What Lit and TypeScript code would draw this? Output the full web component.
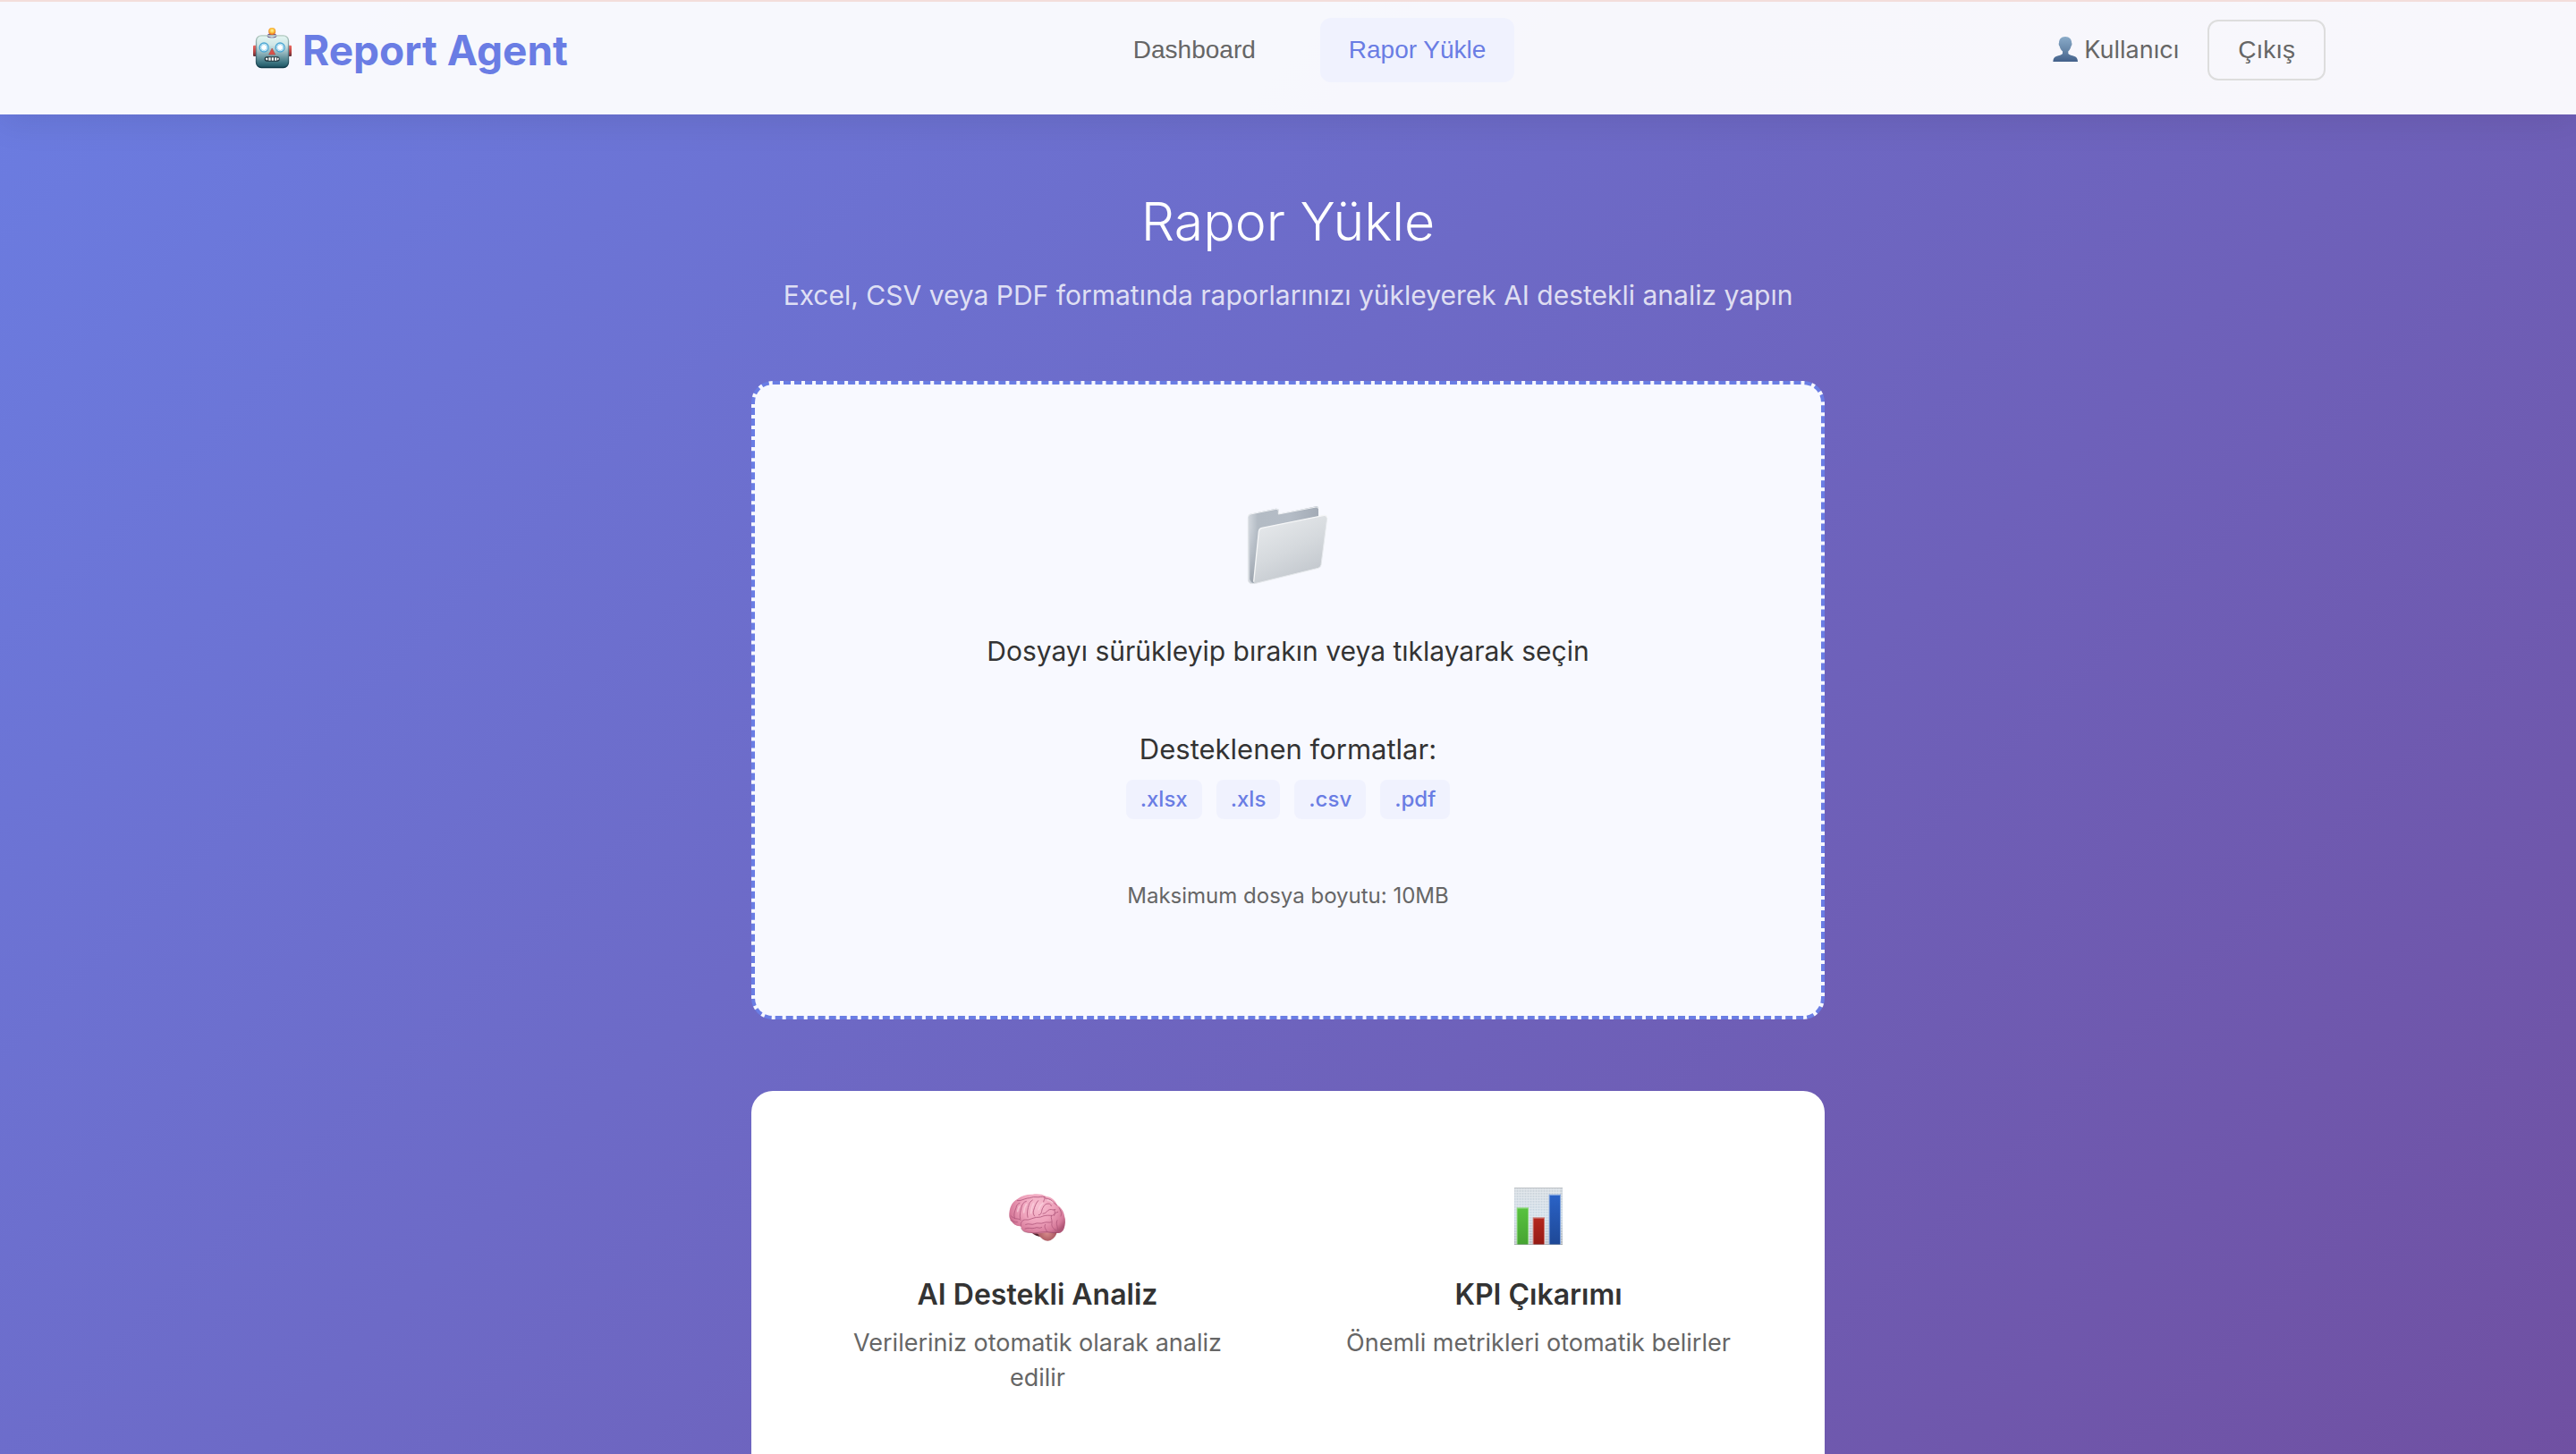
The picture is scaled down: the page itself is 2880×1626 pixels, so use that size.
import { LitElement, html, css, svg } from "lit";
import { customElement } from "lit/decorators.js";

const robotIcon = svg`
  <svg class="robot" viewBox="60 84 144 168" aria-hidden="true">
    <defs>
      <linearGradient id="rb-head" x1="0" y1="0" x2="0" y2="1">
        <stop offset="0" stop-color="#e3f6f2" />
        <stop offset="0.3" stop-color="#cfe6e6" />
        <stop offset="0.55" stop-color="#8fb3bb" />
        <stop offset="0.85" stop-color="#3b7480" />
        <stop offset="1" stop-color="#1d5361" />
      </linearGradient>
      <linearGradient id="rb-rim" x1="0" y1="0" x2="0" y2="1">
        <stop offset="0" stop-color="#b3c9c0" />
        <stop offset="0.5" stop-color="#5f8791" />
        <stop offset="1" stop-color="#0f3a48" />
      </linearGradient>
      <radialGradient id="rb-ball" cx="0.5" cy="0.4" r="0.6">
        <stop offset="0" stop-color="#fff3a0" />
        <stop offset="0.5" stop-color="#fcc43c" />
        <stop offset="1" stop-color="#e2631c" />
      </radialGradient>
      <linearGradient id="rb-ear" x1="0" y1="0" x2="0" y2="1">
        <stop offset="0" stop-color="#ee6a62" />
        <stop offset="0.6" stop-color="#b8403f" />
        <stop offset="1" stop-color="#5a3038" />
      </linearGradient>
    </defs>
    <rect x="69" y="152" width="12" height="37" rx="3" fill="url(#rb-ear)" />
    <rect x="186" y="152" width="12" height="37" rx="3" fill="url(#rb-ear)" />
    <path d="M115 122q2-10 17-10t17 10q-4 5-17 5t-17-5z" fill="#6b5390" />
    <circle cx="132.500" cy="105" r="12" fill="url(#rb-ball)" />
    <rect x="79.500" y="119.500" width="108" height="107" rx="17" fill="url(#rb-head)" stroke="url(#rb-rim)" stroke-width="4" />
    <path d="M115 120q17 10 34 0l-4 5q-13 4-26 0z" fill="#59437d" />
    <circle cx="105.500" cy="159" r="15" fill="#fff" stroke="#4ba6d3" stroke-width="4" />
    <circle cx="105.500" cy="159" r="10.500" fill="#fff" stroke="#8fd0ec" stroke-width="3" />
    <circle cx="159.500" cy="159" r="15" fill="#fff" stroke="#4ba6d3" stroke-width="4" />
    <circle cx="159.500" cy="159" r="10.500" fill="#fff" stroke="#8fd0ec" stroke-width="3" />
    <path d="M132.500 162l11 21h-22z" fill="#d9504a" stroke="#a9453f" stroke-width="1.500" />
    <rect x="107" y="190" width="51" height="16" rx="8" fill="#20343c" />
    <path d="M111 194h7v8h-5q-3-4-2-8zM121 193h7v10h-7zM131 193h7v10h-7zM141 193h7v10h-7zM150 194h5q1 5-2 8h-3z" fill="#f3f6f4" />
  </svg>`;

const userIcon = svg`
  <svg class="person" viewBox="96 120 96 96" aria-hidden="true">
    <defs>
      <linearGradient id="us-fill" x1="0" y1="123" x2="0" y2="207" gradientUnits="userSpaceOnUse">
        <stop offset="0" stop-color="#8aabc9" />
        <stop offset="0.55" stop-color="#6686a8" />
        <stop offset="1" stop-color="#43608a" />
      </linearGradient>
    </defs>
    <path d="M144 123c14 0 21.500 9 21.500 21 1.500 1 1.500 8-2 11-2 9-6 14-9.500 17v8c4 5 12 6 21 9 7 2 10.500 8 11 18H103c.5-10 4-16 11-18 9-3 17-4 21-9v-8c-4-3-8-8-10-17-3.500-3-3.500-10-2-11 0-12 7-21 21-21z" fill="url(#us-fill)" />
  </svg>`;

const folderIcon = svg`
  <svg class="folder" viewBox="96 66 288 288" aria-hidden="true">
    <defs>
      <linearGradient id="fd-back" x1="105" y1="0" x2="342" y2="0" gradientUnits="userSpaceOnUse">
        <stop offset="0" stop-color="#d5dae0" />
        <stop offset="0.14" stop-color="#b3bbc4" />
        <stop offset="0.6" stop-color="#b4bcc6" />
        <stop offset="1" stop-color="#a3abb6" />
      </linearGradient>
      <linearGradient id="fd-front" x1="200" y1="130" x2="290" y2="320" gradientUnits="userSpaceOnUse">
        <stop offset="0" stop-color="#e3e6e9" />
        <stop offset="0.5" stop-color="#d5d9dd" />
        <stop offset="1" stop-color="#c3c8ce" />
      </linearGradient>
      <linearGradient id="fd-side" x1="0" y1="150" x2="0" y2="340" gradientUnits="userSpaceOnUse">
        <stop offset="0" stop-color="#a9b1bb" stop-opacity="0" />
        <stop offset="1" stop-color="#9aa2ac" />
      </linearGradient>
    </defs>
    <path d="M106 113q0-7 7-9l86-18q10-1 10 7v11l125-25q8-1 8 6v190l-213 62q-22 6-23-14z" fill="url(#fd-back)" />
    <path d="M107 113q0-6 7-8l86-17q8-1 8 6v11l126-24q7-1 7 5" fill="none" stroke="#f0f2f4" stroke-width="3" />
    <path d="M112 130l32 30-16 176q-14 0-16-14z" fill="url(#fd-side)" />
    <path d="M142 164q1-11 11-13l208-42q10-1 10 9l-20 157q-2 9-10 11l-213 52q-4-1-3-8z" fill="url(#fd-front)" />
    <path d="M125 332l17-168q1-11 11-13l208-42q10-1 10 9" fill="none" stroke="#f5f6f7" stroke-width="4" />
    <path d="M371 118l-20 157q-2 9-10 11l-213 52" fill="none" stroke="#e6e9ec" stroke-width="3" />
    <path d="M106 118v206q0 14 16 14" fill="none" stroke="#e2e5e9" stroke-width="3" />
  </svg>`;

const brainIcon = svg`
  <svg class="feature-icon" viewBox="60 30 240 240" aria-hidden="true">
    <defs>
      <radialGradient id="br-fill" cx="180" cy="115" r="110" gradientUnits="userSpaceOnUse">
        <stop offset="0" stop-color="#f8bfd1" />
        <stop offset="0.5" stop-color="#efa3bc" />
        <stop offset="0.85" stop-color="#d67a9a" />
        <stop offset="1" stop-color="#b05777" />
      </radialGradient>
      <radialGradient id="br-stem" cx="212" cy="206" r="34" gradientUnits="userSpaceOnUse">
        <stop offset="0" stop-color="#d88c8c" />
        <stop offset="1" stop-color="#a5525c" />
      </radialGradient>
    </defs>
    <path d="M160 205q20-8 34 2l2 12q-24 0-36-14z" fill="#54242e" />
    <path d="M178 206q30-14 68-4-6 22-22 29-14 5-26-3-10-7-20-22z" fill="url(#br-stem)" />
    <path d="M85 150c-1-26 8-48 28-58 14-11 32-16 50-15 14-3 34-1 45 6 18 2 32 14 38 30 14 8 22 22 24 36 5 14 3 30-1 42-4 12-14 18-24 15-14 4-30-2-44 0-18 2-32 4-46 0-18 0-30-8-31-22-12 0-24-6-29-14-6-6-9-12-10-20z" fill="url(#br-fill)" />
    <g fill="none" stroke="#b0587c" stroke-width="2.500" stroke-linecap="round" stroke-linejoin="round">
      <path d="M124 184c-2-12 4-22 16-22 12 2 18-4 28-6 10-4 20 0 30-6 12-4 22-2 32-2 8-4 8-10 18-12" />
      <path d="M104 158c-6-12 0-26 4-36 0-8 6-14 12-16" />
      <path d="M92 150c4 4 8 6 14 8 8 2 14 0 18 6" />
      <path d="M122 160c-4-14 2-28 4-40 2-10 8-18 16-20" />
      <path d="M147 154c-4-14 0-30 4-42 2-8 6-12 12-16" />
      <path d="M170 150c-4-4-6-12-3-20 4-12 6-22 15-32" />
      <path d="M184 146c12 0 8-16 14-24 4-8 8-14 18-14 6 0 10 4 10 8" />
      <path d="M198 142c12 0 14-12 22-14 10-2 12 4 20 0" />
      <path d="M112 98c12 2 22-6 34-8 12 0 16-6 28-4 14 2 18-4 30 0" />
      <path d="M204 86c2 8-4 10-4 16M206 90c14 2 22 6 28 14 4 6 8 6 12 10" />
      <path d="M252 122c6 10 10 18 6 28M236 128c4 8 2 14 0 20" />
      <path d="M140 178c12-6 20 4 30-2 10-6 20 2 32-4 8-4 18 2 24-2" />
      <path d="M138 192c14-6 20 2 32-2 10-6 14 4 24-2" />
      <path d="M226 148c-2 10 4 16 2 26-2 10 4 18 14 24" />
      <path d="M206 178c-6 8 2 16 6 24M246 164c-6 10 2 20 2 34" />
      <path d="M90 164c8 2 14 8 22 6" />
    </g>
    <g fill="none" stroke="#fbd5e0" stroke-width="5" stroke-linecap="round" opacity="0.65">
      <path d="M134 138c0-12 4-22 8-28M158 140c0-12 3-22 8-32M184 128c2-8 6-16 14-22M214 96c8 2 12 4 16 8M113 134c1-8 3-12 6-17" />
    </g>
    <path d="M125 190c4 12 16 16 32 15 14 4 30-2 46-2 14-2 30 6 44 2" fill="none" stroke="#7c3048" stroke-width="2" opacity="0.6" />
  </svg>`;

const gridX = Array.from({ length: 17 }, (_, i) => 105 + i * 9);
const gridY = Array.from({ length: 21 }, (_, i) => 61 + i * 9);

const chartIcon = svg`
  <svg class="feature-icon" viewBox="60 30 240 240" aria-hidden="true">
    <defs>
      <linearGradient id="ch-bg" x1="0" y1="0" x2="0" y2="1">
        <stop offset="0" stop-color="#ccd2d8" />
        <stop offset="0.5" stop-color="#c9d9e6" />
        <stop offset="1" stop-color="#b0b6be" />
      </linearGradient>
      <linearGradient id="ch-green" x1="0" y1="0" x2="0" y2="1">
        <stop offset="0" stop-color="#58c23f" />
        <stop offset="1" stop-color="#46a332" />
      </linearGradient>
      <linearGradient id="ch-red" x1="0" y1="0" x2="0" y2="1">
        <stop offset="0" stop-color="#b3271e" />
        <stop offset="1" stop-color="#951a14" />
      </linearGradient>
      <linearGradient id="ch-blue" x1="0" y1="0" x2="0" y2="1">
        <stop offset="0" stop-color="#2a62c6" />
        <stop offset="1" stop-color="#1e4896" />
      </linearGradient>
    </defs>
    <rect x="99" y="54" width="162" height="192" fill="url(#ch-bg)" />
    <g stroke="#f1f5f8" stroke-width="3" opacity="0.65">
      ${gridX.map((x) => svg`<path d="M${x} 56V245" />`)}
      ${gridY.map((y) => svg`<path d="M100 ${y}H260" />`)}
    </g>
    <path d="M99 55.500H261" stroke="#c0c4c8" stroke-width="3" />
    <rect x="107" y="121" width="40" height="125" fill="#8ed97c" />
    <rect x="110" y="125" width="34" height="121" fill="url(#ch-green)" />
    <rect x="161" y="154" width="40" height="92" fill="#cf7a74" />
    <rect x="164" y="158" width="34" height="88" fill="url(#ch-red)" />
    <rect x="215" y="77" width="40" height="169" fill="#7fa3de" />
    <rect x="218" y="81" width="34" height="165" fill="url(#ch-blue)" />
    <path d="M99 244.500H261" stroke="#8d9298" stroke-width="3" opacity="0.5" />
  </svg>`;

const formats = [".xlsx", ".xls", ".csv", ".pdf"];

const features = [
  { icon: brainIcon, title: "AI Destekli Analiz", text: "Verileriniz otomatik olarak analiz edilir" },
  { icon: chartIcon, title: "KPI Çıkarımı", text: "Önemli metrikleri otomatik belirler" },
];

@customElement("app-header")
export class AppHeader extends LitElement {
  static styles = css`
    :host {
      display: block;
      position: relative;
      background: rgba(255, 255, 255, 0.95);
      border-top: 2px solid #f3dedb;
      box-shadow: 0 4px 40px rgba(0, 0, 0, 0.1);
    }
    .bar {
      box-sizing: border-box;
      max-width: 2400px;
      margin: 0 auto;
      padding: 18px 40px 36px;
      display: flex;
      align-items: center;
      justify-content: space-between;
    }
    .logo {
      display: flex;
      align-items: center;
      gap: 10px;
      margin: 0;
      font-size: 46px;
      line-height: 58px;
      font-weight: 700;
      color: var(--accent);
    }
    .robot {
      width: 48px;
      height: 56px;
    }
    .links {
      display: flex;
      gap: 40px;
    }
    .link {
      padding: 20px 32px;
      border-radius: 12px;
      font: 28px/32px "Liberation Sans", Arial, sans-serif;
      color: #666;
      text-decoration: none;
    }
    .link.active {
      color: var(--accent);
      background: #f0f2fe;
    }
    .account {
      display: flex;
      align-items: center;
      gap: 32px;
    }
    .user {
      display: flex;
      align-items: center;
      gap: 5px;
      font-size: 27px;
      line-height: 36px;
      color: #666;
    }
    .person {
      width: 32px;
      height: 32px;
    }
    .logout {
      padding: 16px 32px;
      border: 2px solid #ddd;
      border-radius: 12px;
      background: transparent;
      font: 28px/32px "Liberation Sans", Arial, sans-serif;
      color: #666;
      cursor: pointer;
    }
  `;

  render() {
    return html`
      <header class="bar">
        <div class="logo">${robotIcon}<span>Report Agent</span></div>
        <nav class="links">
          <a class="link" href="#dashboard">Dashboard</a>
          <a class="link active" href="#upload" aria-current="page">Rapor Yükle</a>
        </nav>
        <div class="account">
          <span class="user">${userIcon}<span>Kullanıcı</span></span>
          <button class="logout" type="button">Çıkış</button>
        </div>
      </header>
    `;
  }
}

@customElement("file-dropzone")
export class FileDropzone extends LitElement {
  static styles = css`
    :host {
      display: block;
    }
    .zone {
      position: relative;
      display: flex;
      flex-direction: column;
      align-items: center;
      padding: 132px 40px 120px;
      border: 4px dashed var(--accent);
      border-radius: 24px;
      background: #f8f9ff;
      color: #333;
      text-align: center;
      cursor: pointer;
    }
    .file {
      position: absolute;
      width: 1px;
      height: 1px;
      opacity: 0;
    }
    .folder {
      width: 96px;
      height: 96px;
    }
    .prompt,
    .caption {
      line-height: 40px;
    }
    .prompt {
      margin-top: 50px;
      font-size: 30px;
    }
    .caption {
      margin-top: 70px;
      font-size: 31px;
    }
    .formats {
      display: flex;
      gap: 16px;
      margin-top: 14px;
    }
    .format {
      padding: 8px 16px;
      border-radius: 8px;
      background: #f0f2fe;
      color: var(--accent);
      font-size: 24px;
      line-height: 28px;
      font-weight: 500;
    }
    .limit {
      margin-top: 72px;
      font-size: 24px;
      line-height: 28px;
      color: #666;
    }
  `;

  render() {
    return html`
      <label class="zone">
        <input class="file" type="file" accept=${formats.join(",")} />
        ${folderIcon}
        <span class="prompt">Dosyayı sürükleyip bırakın veya tıklayarak seçin</span>
        <span class="caption">Desteklenen formatlar:</span>
        <span class="formats">
          ${formats.map((f) => html`<span class="format">${f}</span>`)}
        </span>
        <span class="limit">Maksimum dosya boyutu: 10MB</span>
      </label>
    `;
  }
}

@customElement("feature-list")
export class FeatureList extends LitElement {
  static styles = css`
    :host {
      display: block;
      box-sizing: border-box;
      padding: 60px;
      border-radius: 24px 24px 0 0;
      background: #fff;
    }
    .grid {
      display: grid;
      grid-template-columns: 1fr 1fr;
      gap: 40px;
    }
    .feature {
      padding: 40px;
      text-align: center;
    }
    .feature-icon {
      display: block;
      width: 80px;
      height: 80px;
      margin: 0 auto 28px;
    }
    .title {
      margin: 0 0 14px;
      font-size: 32px;
      line-height: 40px;
      font-weight: 600;
      color: #333;
    }
    .text {
      margin: 0;
      font-size: 27px;
      line-height: 39px;
      color: #666;
    }
  `;

  render() {
    return html`
      <div class="grid">
        ${features.map(
          (f) => html`
            <article class="feature">
              ${f.icon}
              <h2 class="title">${f.title}</h2>
              <p class="text">${f.text}</p>
            </article>
          `,
        )}
      </div>
    `;
  }
}

@customElement("app-root")
export class AppRoot extends LitElement {
  static styles = css`
    :host {
      --accent: #6a7de4;
      display: flex;
      flex-direction: column;
      min-height: 100vh;
      background: linear-gradient(135deg, #6b7de2 0%, #704e9f 104%);
      font-family: Inter, "Noto Sans", sans-serif;
    }
    .page {
      flex: 1;
      display: flex;
      flex-direction: column;
      box-sizing: border-box;
      width: 100%;
      max-width: 1280px;
      margin: 0 auto;
      padding: 80px 40px 0;
    }
    .heading {
      margin: 0 0 24px;
      font-size: 59px;
      line-height: 80px;
      font-weight: 300;
      text-align: center;
      color: #fff;
    }
    .lead {
      margin: 0 0 78px;
      font-size: 30px;
      line-height: 36px;
      text-align: center;
      color: rgba(255, 255, 255, 0.8);
    }
    .features {
      flex: 1;
      margin-top: 80px;
    }
  `;

  render() {
    return html`
      <app-header></app-header>
      <main class="page">
        <h1 class="heading">Rapor Yükle</h1>
        <p class="lead">Excel, CSV veya PDF formatında raporlarınızı yükleyerek AI destekli analiz yapın</p>
        <file-dropzone></file-dropzone>
        <feature-list class="features"></feature-list>
      </main>
    `;
  }
}
